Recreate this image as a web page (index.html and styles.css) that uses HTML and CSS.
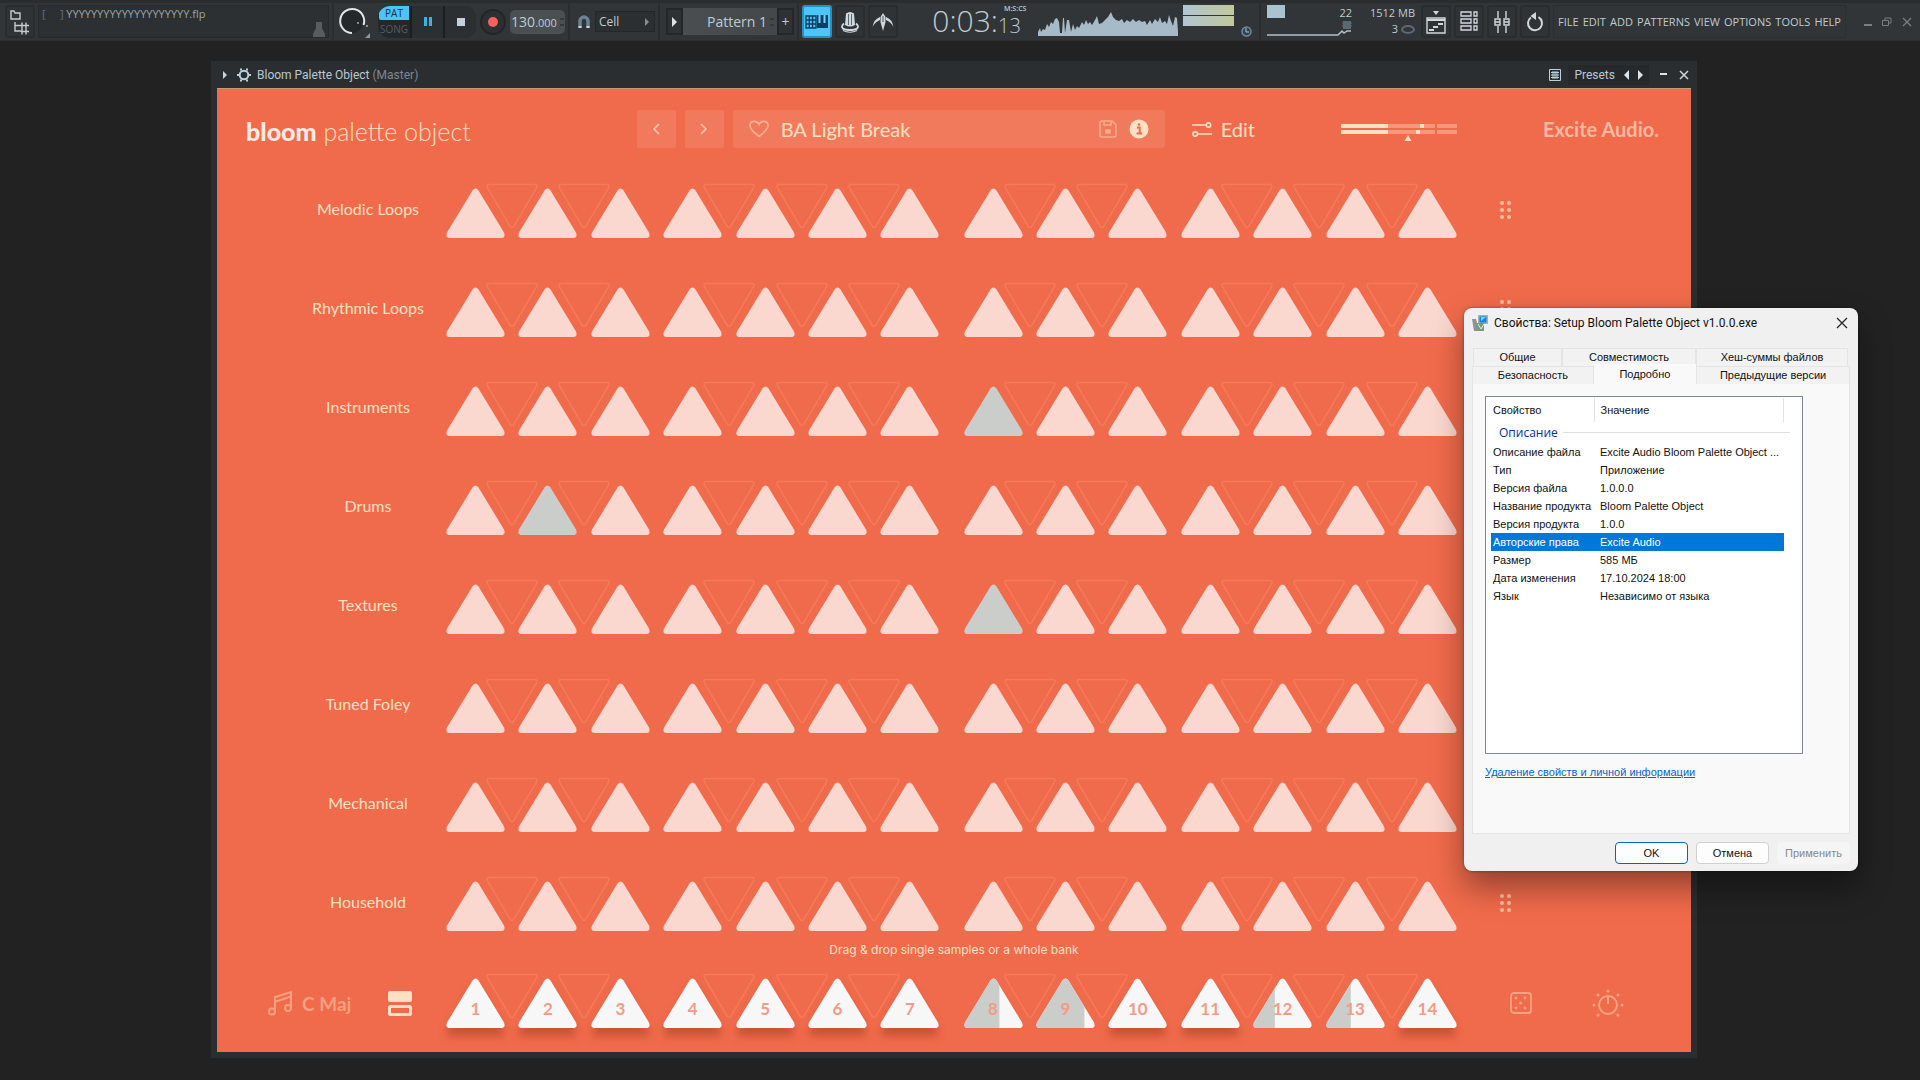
FILE: index.html
```html
<!DOCTYPE html>
<html lang="en">
<head>
<meta charset="utf-8">
<meta name="viewport" content="width=device-width, initial-scale=1">
<title>Bloom Palette Object</title>
<link rel="stylesheet" href="styles.css">
</head>
<body>
<header class="toolbar">
  <button class="tool tool-browser" aria-label="Browser">
    <svg width="22" height="26" viewBox="0 0 22 26" fill="none" stroke="#c3ccd2" stroke-width="1.4"><path d="M2 2h3l1 2h5v6H2zM6 13v9h6M6 16.500h6M13 13.500v6M17 13.500v6M13 19.500v6M17 19.500v6M12 16.500h8M12 22.500h8"/></svg>
  </button>
  <div class="hint-panel">
    <span class="file-name"><span class="brackets">[ &nbsp; &nbsp; ]</span> YYYYYYYYYYYYYYYYYYYY.flp</span>
    <svg class="hint-icon" width="12" height="16" viewBox="0 0 12 16"><path d="M3 1h6v6l3 6v3H0v-3l3-6z" fill="#565c60"/></svg>
  </div>
  <div class="rule"></div>
  <svg class="knob" width="40" height="33" viewBox="0 0 40 33"><circle cx="15" cy="16" r="12" fill="#25282a"/><path d="M15 28A12 12 0 1 1 26.500 20" fill="none" stroke="#dfe5e8" stroke-width="2"/><circle cx="21" cy="18" r="1" fill="#aaa"/><circle cx="30" cy="21" r="1" fill="#aaa"/><path d="M33 28v5h-5z" fill="#8c98a0"/></svg>
  <div class="transport">
    <div class="mode"><button class="pat">PAT</button><button class="song">SONG</button></div>
    <button class="play" aria-label="Pause"><svg width="8" height="9"><path d="M0 0h3v9H0zM5 0h3v9H5z" fill="#35b4e8"/></svg></button>
    <button class="stop" aria-label="Stop"><svg width="8" height="8"><path d="M0 0h8v8H0z" fill="#c5d0d8"/></svg></button>
  </div>
  <button class="record" aria-label="Record"><svg width="10" height="10"><circle cx="5" cy="5" r="5" fill="#f9605c"/></svg></button>
  <div class="tempo"><span>130</span><span class="tempo-small">.000</span><span class="spin"><i></i><i></i></span></div>
  <div class="rule"></div>
  <svg class="magnet" width="14" height="16" viewBox="0 0 14 16"><path d="M3 14V7a4 4 0 0 1 8 0v7" fill="none" stroke="#6b8194" stroke-width="3.500"/><path d="M1.500 13h3M9.500 13h3" stroke="#c6d4de" stroke-width="2"/></svg>
  <button class="snap">Cell<svg width="5" height="8"><path d="M0 0l4 4-4 4z" fill="#848c92"/></svg></button>
  <div class="rule"></div>
  <div class="pattern">
    <button class="pat-btn" aria-label="Pattern menu"><svg width="5" height="10"><path d="M0 0l5 5-5 5z" fill="#dbe4ea"/></svg></button>
    <span class="pat-name">Pattern 1<span class="spin"><i></i><i></i></span></span>
    <button class="pat-btn">+</button>
  </div>
  <div class="rule"></div>
  <button class="tool tool-on" aria-label="Typing keyboard"><svg width="24" height="14" viewBox="0 0 24 14"><path d="M1 1h10v12H1zM1 5h10M1 9h10M4.300 1v12M7.600 1v12" fill="none" stroke="#0b3f63" stroke-width="1.400"/><path d="M12 0h11v13H12z" fill="#0b3f63"/><path d="M14.500 0v8M19.500 0v8" stroke="#6fd5ff" stroke-width="2"/></svg></button>
  <button class="tool" aria-label="Metronome"><svg width="20" height="22" viewBox="0 0 20 22"><path d="M6 2.500q4-3 8 0l1 11.500q-5 3-10 0z" fill="#cfd8de"/><path d="M8.500 3v11M11.500 3v11" stroke="#5b656c"/><path d="M4 12.500C-1 17 4 19 10 19s11-2 6-6.500" fill="none" stroke="#cfd8de" stroke-width="1.800"/><path d="M3 19.500q7 3.500 14 0" fill="none" stroke="#cfd8de" stroke-width="1.200"/></svg></button>
  <button class="tool" aria-label="Wait for input"><svg width="22" height="20" viewBox="0 0 22 20"><path d="M11 1l2.500 4v5L11 19l-2.500-9V5z" fill="#cfd8de"/><path d="M11 4v6" stroke="#45545e"/><path d="M8 5Q2 7 .5 15 3 10 8 8zM14 5q6 2 7.500 10Q19 10 14 8z" fill="#cfd8de"/></svg></button>
  <div class="time"><span>0:03:</span><span class="time-side"><small>M:S:CS</small><span>13</span></span></div>
  <div class="scope">
    <svg width="140" height="24" viewBox="0 0 140 24"><path fill="#a6bac7" d="M0 24V20L2 16 3 20 5 17 7 18 9 12 11 15 13 10 15 12 17 7 19 6 21 10 22 21 24 21 25 6 26 6 27 21 29 8 31 8 33 20 35 12 37 18 39 14 41 16 44 10 46 13 48 8 50 12 52 10 54 13 57 8 59 4 61 12 64 11 67 8 70 5 73 0 75 5 78 8 81 9 84 7 86 11 89 8 92 10 95 7 98 10 101 8 104 10 107 9 109 13 112 8 114 12 117 7 120 10 122 5 124 11 127 9 129 12 131 3 133 9 135 14 137 5 139 6 140 20V24z"/></svg>
  </div>
  <div class="peaks"><div class="peak-bars"><i></i><i></i></div><svg class="peak-icon" width="11" height="11"><circle cx="5.500" cy="5.500" r="4.500" fill="#31434f" stroke="#6e899b" stroke-width="1.500"/><path d="M5 2v4h3" stroke="#a8c3d6" fill="none"/></svg></div>
  <div class="rule"></div>
  <div class="stats">
    <svg width="84" height="32" viewBox="0 0 84 32"><path d="M0 0h18v13H0z" fill="#a9c3d0"/><path d="M0 30h71l4-4 2 2 3-2h4" fill="none" stroke="#b4bfc6" stroke-width="1.500"/></svg>
    <div class="stat-col"><span>22</span><svg width="10" height="8"><path d="M1 0h8v8H1z" fill="#5b6972"/><path d="M0 2h10M0 5h10" stroke="#5b6972"/></svg></div>
    <div class="stat-col stat-mem"><span>1512 MB</span><span>3 <svg width="14" height="9"><ellipse cx="7" cy="4.500" rx="6" ry="3.500" fill="none" stroke="#5b6972" stroke-width="2"/></svg></span></div>
  </div>
  <div class="views">
    <button class="tool" aria-label="Playlist"><svg width="20" height="24" viewBox="0 0 20 24"><path d="M7 1h6l-3 4z" fill="#cfd8de"/><path d="M1 8h18v15H1z" fill="none" stroke="#cfd8de" stroke-width="1.400"/><path d="M1 10h18M3 20h5M7 17h5M12 14h5" stroke="#cfd8de" stroke-width="2"/></svg></button>
    <button class="tool" aria-label="Channel rack"><svg width="18" height="21" viewBox="0 0 18 21" fill="none" stroke="#cfd8de" stroke-width="1.300"><path d="M1 1h10v4H1zM1 8h10v4H1zM1 15h10v4H1zM14 1h3v4h-3zM14 8h3v4h-3zM14 15h3v4h-3z"/></svg></button>
    <button class="tool" aria-label="Mixer"><svg width="16" height="24" viewBox="0 0 16 24" fill="none" stroke="#cfd8de" stroke-width="1.400"><path d="M4 1v7M4 16v7M12 1v7M12 16v7M1 9h5v6H1zM10 9h5v6h-5zM1 12h5M10 12h5"/></svg></button>
    <button class="tool" aria-label="Undo"><svg width="18" height="20" viewBox="0 0 18 20"><path d="M12.500 5.200A7 7 0 1 1 5 5.500" fill="none" stroke="#cfd8de" stroke-width="2"/><path d="M10 0v8L4.500 4z" fill="#cfd8de"/></svg></button>
  </div>
  <nav class="menu">
    <a href="#">FILE</a><a href="#">EDIT</a><a href="#">ADD</a><a href="#">PATTERNS</a><a href="#">VIEW</a><a href="#">OPTIONS</a><a href="#">TOOLS</a><a href="#">HELP</a>
  </nav>
  <div class="app-controls">
    <button aria-label="Minimize"><svg width="8" height="8"><path d="M0 7h8" stroke="#777f85" stroke-width="2"/></svg></button>
    <button aria-label="Restore"><svg width="10" height="10" fill="none" stroke="#777f85"><path d="M.5 3.500h6v5h-6zM3 3V1h6v5H7"/></svg></button>
    <button aria-label="Close"><svg width="10" height="10"><path d="M1 1l8 8M9 1l-8 8" stroke="#777f85" stroke-width="1.300"/></svg></button>
  </div>
</header>

<main class="desktop">
  <section class="plugin">
    <div class="plugin-bar">
      <svg width="5" height="8"><path d="M0 0l4 4-4 4z" fill="#c5d4de"/></svg>
      <svg class="gear" width="14" height="14" viewBox="0 0 14 14"><circle cx="7" cy="7" r="4.300" fill="none" stroke="#bcd0dc" stroke-width="2"/><path d="M4 .5v2M10 .5v2M4 11.500v2M10 11.500v2M0 7h2M12 7h2" stroke="#bcd0dc" stroke-width="2"/></svg>
      <h1 class="plugin-title">Bloom Palette Object <span>(Master)</span></h1>
      <svg class="grid-icon" width="12" height="12" viewBox="0 0 12 12" fill="none" stroke="#bcd0dc"><path d="M.5.5h11v11H.5zM2 3.500h8M2 6h8M2 8.500h8M4 2v8M6 2v8M8 2v8"/></svg>
      <div class="presets"><span>Presets</span>
        <button aria-label="Previous preset"><svg width="5" height="10"><path d="M5 0v10L0 5z" fill="#dbe4ea"/></svg></button>
        <button aria-label="Next preset"><svg width="5" height="10"><path d="M0 0v10l5-5z" fill="#dbe4ea"/></svg></button>
      </div>
      <button class="bar-btn" aria-label="Minimize"><svg width="8" height="10"><path d="M0 4h7" stroke="#dbe4ea" stroke-width="2"/></svg></button>
      <button class="bar-btn" aria-label="Close"><svg width="10" height="10"><path d="M1 1l8 8M9 1l-8 8" stroke="#cfd8de" stroke-width="1.500"/></svg></button>
    </div>
    <div class="bloom">
      <div class="bloom-head">
        <div class="brand"><b>bloom</b> palette object</div>
        <button class="step" aria-label="Previous"><svg width="8" height="12"><path d="M7 1L2 6l5 5" fill="none" stroke="#fdc9a6" stroke-width="1.600"/></svg></button>
        <button class="step" aria-label="Next"><svg width="8" height="12"><path d="M1 1l5 5-5 5" fill="none" stroke="#fdc9a6" stroke-width="1.600"/></svg></button>
        <div class="preset">
          <svg width="20" height="18" viewBox="0 0 20 18"><path d="M10 16.500C4 12 1 9 1 5.600 1 1 7.500-.6 10 4.500 12.500-.6 19 1 19 5.600 19 9 16 12 10 16.500z" fill="none" stroke="#f9b294" stroke-width="1.600"/></svg>
          <span class="preset-name">BA Light Break</span>
          <svg width="18" height="18" viewBox="0 0 18 18" fill="none" stroke="#f9ab8b" stroke-width="1.600"><path d="M1 3q0-2 2-2h10l4 4v10q0 2-2 2H3q-2 0-2-2zM5 1v4h7V1"/><path d="M7 10h4v3H7z" fill="#f9ab8b"/></svg>
          <svg width="20" height="20" viewBox="0 0 20 20"><circle cx="10" cy="10" r="9.500" fill="#ffe0c2"/><path d="M8 8.500h2.700V14M7.500 14.500h5.500" fill="none" stroke="#ec6c4c" stroke-width="2"/><circle cx="10" cy="5.500" r="1.300" fill="#ec6c4c"/></svg>
        </div>
        <button class="edit"><svg width="20" height="15" viewBox="0 0 20 15" fill="none" stroke="#ffe0c2" stroke-width="1.700"><path d="M0 3h14M6 12h14"/><circle cx="16.500" cy="3" r="2.200"/><circle cx="3.200" cy="12" r="2.200"/></svg>Edit</button>
        <svg class="meter" width="116" height="20" viewBox="0 0 116 20"><path d="M0 1h94v4H0zM0 7h94v4H0zM96 1h20v4H96zM96 7h20v4H96z" fill="#f8977a"/><path d="M0 1h47v4H0zM0 7h47v4H0zM79 1h4v4h-4zM75 7h4v4h-4zM67 12l3.500 6h-7z" fill="#ffe0c2"/></svg>
        <div class="maker">Excite Audio.</div>
      </div>
      <div class="bank-list" id="banks"></div>
      <p class="drag-hint">Drag &amp; drop single samples or a whole bank</p>
      <div class="bank bank-play">
        <div class="scale-cell">
          <button class="scale"><svg width="26" height="26" viewBox="0 0 26 26" fill="none" stroke="#f8a080" stroke-width="2"><circle cx="4" cy="21.500" r="3"/><circle cx="20" cy="18" r="3"/><path d="M7 21V7l16-5v16M8 11.500l15-5"/></svg>C Maj</button>
          <button class="split" aria-label="Layout"><svg width="24" height="25" viewBox="0 0 24 25"><rect width="24" height="11" rx="2" fill="#ffe0c2"/><rect x="1.500" y="15.500" width="21" height="8" rx="1" fill="none" stroke="#ffe0c2" stroke-width="3"/></svg></button>
        </div>
        <div class="pads" id="play-left"></div>
        <div class="pads" id="play-right"></div>
        <div class="extra-cell">
          <button aria-label="Randomize"><svg width="22" height="22" viewBox="0 0 22 22"><rect x="1" y="1" width="20" height="20" rx="3" fill="none" stroke="#f9a382" stroke-width="1.800"/><g fill="#f9a382"><circle cx="6" cy="6" r="1.400"/><circle cx="15" cy="6" r="1.400"/><circle cx="10.500" cy="11" r="1.600"/><circle cx="6" cy="16" r="1.400"/><circle cx="15" cy="16" r="1.400"/></g></svg></button>
          <button aria-label="Macro"><svg width="32" height="28" viewBox="0 0 32 28"><circle cx="16" cy="16" r="9" fill="none" stroke="#f9a382" stroke-width="2"/><path d="M16 8v7" stroke="#f9a382" stroke-width="2"/><g fill="#f9a382"><circle cx="16" cy="2" r="1.500"/><circle cx="6" cy="6" r="1.500"/><circle cx="26" cy="6" r="1.500"/><circle cx="2" cy="16" r="1.500"/><circle cx="30" cy="16" r="1.500"/><circle cx="6" cy="26" r="1.500"/><circle cx="26" cy="26" r="1.500"/></g></svg></button>
        </div>
      </div>
    </div>
  </section>

  <section class="dialog" role="dialog" aria-labelledby="dialog-title">
    <div class="dialog-head">
      <svg width="16" height="16" viewBox="0 0 16 16"><path d="M0 4h4l3 12H2z" fill="#8d9294"/><path d="M6 0h10v9H6z" fill="#9fb3bf"/><path d="M7.500 1.500h7v6h-7z" fill="#1685d8"/><path d="M9 2h5L9 6z" fill="#6fd0fa"/><path d="M4 8h8v8H5z" fill="#7d9681"/><path d="M6 9l3 5 3-5" fill="none" stroke="#e5eee5"/></svg>
      <h2 id="dialog-title">Свойства: Setup Bloom Palette Object v1.0.0.exe</h2>
      <button class="dialog-close" aria-label="Закрыть"><svg width="12" height="12"><path d="M1 1l10 10M11 1L1 11" stroke="#222" stroke-width="1.200"/></svg></button>
    </div>
    <div class="tabs tabs-back"><button>Общие</button><button>Совместимость</button><button>Хеш-суммы файлов</button></div>
    <div class="tabs tabs-front"><button>Безопасность</button><button class="active">Подробно</button><button>Предыдущие версии</button></div>
    <div class="sheet">
      <div class="list">
        <table>
          <thead><tr><th>Свойство</th><th>Значение</th></tr></thead>
          <tbody>
            <tr class="group"><td colspan="2"><span>Описание</span></td></tr>
            <tr><td>Описание файла</td><td>Excite Audio Bloom Palette Object ...</td></tr>
            <tr><td>Тип</td><td>Приложение</td></tr>
            <tr><td>Версия файла</td><td>1.0.0.0</td></tr>
            <tr><td>Название продукта</td><td>Bloom Palette Object</td></tr>
            <tr><td>Версия продукта</td><td>1.0.0</td></tr>
            <tr class="selected"><td>Авторские права</td><td>Excite Audio</td></tr>
            <tr><td>Размер</td><td>585 МБ</td></tr>
            <tr><td>Дата изменения</td><td>17.10.2024 18:00</td></tr>
            <tr><td>Язык</td><td>Независимо от языка</td></tr>
          </tbody>
        </table>
      </div>
      <a href="#">Удаление свойств и личной информации</a>
    </div>
    <div class="actions"><button class="ok">OK</button><button>Отмена</button><button disabled>Применить</button></div>
  </section>
</main>
<script src="pads.js"></script>
</body>
</html>
```
FILE: pads.js
```js
// Rounded triangle of a pad, and the outline of the "black key" between two pads.
const PAD = 'M26.500 2.500Q29.500-1.500 32.500 2.500L58 44.500Q60 50 55 50H4Q-1 50 1 44.500Z';
const KEY = 'M43-3.500H89Q92-3.500 90.500 0L68 38Q66 41 64 38L41.500 0Q40-3.500 43-3.500Z';
const KEY_AFTER = [1, 2, 4, 5, 6, 8, 9, 11, 12, 13];

const banks = [
  { name: 'Melodic Loops' },
  { name: 'Rhythmic Loops' },
  { name: 'Instruments', active: 8 },
  { name: 'Drums', active: 2 },
  { name: 'Textures', active: 8 },
  { name: 'Tuned Foley' },
  { name: 'Mechanical' },
  { name: 'Household' }
];
const progress = { 8: 60, 9: 82, 12: 37, 13: 42 };

function key(n) {
  return KEY_AFTER.includes(n) ? `<path class="key" d="${KEY}"/>` : '';
}

function samplePad(n, bank) {
  const on = bank.active === n ? ' on' : '';
  return `<button class="pad${on}" aria-label="${bank.name} ${n}"><svg viewBox="0 0 59 50">${key(n)}<path class="face" d="${PAD}"/></svg></button>`;
}

function playPad(n) {
  const p = progress[n];
  const played = p
    ? `<clipPath id="clip${n}"><rect width="${p}%" height="50"/></clipPath><path class="played" clip-path="url(#clip${n})" d="${PAD}"/>`
    : '';
  return `<button class="pad play-pad${p ? ' playing' : ''}"><svg viewBox="0 0 59 50">${key(n)}<path class="face" d="${PAD}"/>${played}</svg><span>${n}</span></button>`;
}

const left = [1, 2, 3, 4, 5, 6, 7];
const right = [8, 9, 10, 11, 12, 13, 14];

document.getElementById('banks').innerHTML = banks.map(b => `
  <div class="bank">
    <div class="bank-name">${b.name}</div>
    <div class="pads">${left.map(n => samplePad(n, b)).join('')}</div>
    <div class="pads">${right.map(n => samplePad(n, b)).join('')}</div>
    <div class="grip"><i></i><i></i><i></i><i></i><i></i><i></i></div>
  </div>`).join('');
document.getElementById('play-left').innerHTML = left.map(playPad).join('');
document.getElementById('play-right').innerHTML = right.map(playPad).join('');
```
FILE: styles.css
```css
* { box-sizing: border-box; }
body {
  margin: 0;
  min-height: 100vh;
  display: flex;
  flex-direction: column;
  background: #222;
  overflow: hidden;
  font-family: "Open Sans", "Noto Sans", sans-serif;
}
button {
  margin: 0;
  padding: 0;
  border: 0;
  background: none;
  color: inherit;
  font: inherit;
}
svg { display: block; flex: none; }
h1, h2, p { margin: 0; font-weight: 400; }

/* Top toolbar */
.toolbar {
  display: flex;
  align-items: center;
  height: 41px;
  padding-left: 5px;
  background: #323537;
  border-top: 3px solid #2a2c2e;
  border-bottom: 1px solid #2a2c2e;
  color: #bfcbd3;
  font-family: "Open Sans", "Noto Sans", sans-serif;
  white-space: nowrap;
}
.toolbar > * { flex: none; }
.tool {
  display: flex;
  align-items: center;
  justify-content: center;
  width: 30px;
  height: 33px;
  margin-right: 3px;
  border: 2px solid #2a2d2f;
  border-radius: 3px;
  background: #303335;
}
.tool-on {
  border-color: #1e93c8;
  background: #4cc6f6;
}
.hint-panel {
  display: flex;
  justify-content: space-between;
  width: 291px;
  height: 33px;
  padding: 0 3px;
  background: #2d3032;
  border: 1px solid #272a2c;
}
.file-name { font-size: 11px; line-height: 16px; color: #9ba4aa; }
.brackets { color: #687076; }
.hint-icon { align-self: flex-end; }
.rule {
  width: 2px;
  height: 37px;
  margin: 0 3px;
  background: #2a2d2f;
}
.knob { margin-right: 1px; }
.transport {
  display: flex;
  width: 98px;
  height: 32px;
  border-radius: 12px;
  background: #25282a;
  overflow: hidden;
}
.transport > button {
  display: grid;
  place-items: center;
  flex: 1;
  border-left: 2px solid #1b1d1f;
  background: #2c2f31;
}
.mode { display: grid; grid-template-rows: 14px 1fr; width: 32px; padding: 0 1px; }
.pat { border-radius: 6px 0 0 2px; background: #4cc4f4; color: #0d3550; font-size: 10px; line-height: 14px; }
.song { color: #565c60; font-size: 10px; line-height: 14px; }
.record {
  display: grid;
  place-items: center;
  width: 26px;
  height: 26px;
  margin: 0 4px;
  border: 2px solid #232628;
  border-radius: 50%;
  background: #2d3032;
}
.tempo {
  display: flex;
  align-items: baseline;
  justify-content: center;
  width: 55px;
  height: 24px;
  border-radius: 5px;
  background: #4a4f52;
  font-size: 14px;
  line-height: 24px;
}
.tempo-small { font-size: 11px; }
.spin { display: inline-grid; gap: 4px; margin-left: 3px; align-self: center; }
.spin i { width: 4px; height: 2px; background: #33383b; }
.magnet { margin: 0 4px; }
.snap {
  display: flex;
  align-items: center;
  justify-content: space-between;
  width: 60px;
  height: 21px;
  padding: 0 4px 0 3px;
  border: 1px solid #24272a;
  background: #2c2f31;
  font-size: 12px;
}
.pattern { display: flex; margin-left: 3px; }
.pat-btn {
  display: grid;
  place-items: center;
  width: 17px;
  height: 27px;
  border: 2px solid #24272a;
  background: #2f3234;
  font-size: 14px;
  line-height: 16px;
}
.pat-name {
  display: flex;
  align-items: center;
  justify-content: flex-end;
  width: 94px;
  padding-right: 3px;
  background: linear-gradient(90deg, #4a4e50, #434749);
  font-size: 14px;
}
.time {
  display: flex;
  justify-content: flex-end;
  width: 132px;
  height: 35px;
  padding-right: 3px;
  font-size: 30px;
  font-weight: 300;
  line-height: 34px;
}
.time-side { display: flex; flex-direction: column; width: 32px; font-size: 20px; line-height: 23px; }
.time-side small { padding-left: 6px; font-size: 7px; font-weight: 600; line-height: 10px; }
.scope { margin-left: 5px; padding-top: 5px; }
.peaks { display: flex; flex-direction: column; width: 78px; height: 35px; padding: 1px 4px 0 5px; }
.peak-bars { display: grid; gap: 1px; width: 51px; }
.peak-bars i { height: 10px; background: linear-gradient(90deg, #b0c6d2, #c3c79b); }
.peak-icon { align-self: flex-end; }
.stats { display: flex; height: 33px; padding-left: 3px; font-size: 11px; line-height: 16px; }
.stat-col { display: flex; flex-direction: column; align-items: flex-end; width: 1px; }
.stat-mem { width: 63px; }
.stat-mem span { display: flex; align-items: center; gap: 3px; }
.views { display: flex; margin-left: 6px; }
.toolbar .menu {
  display: flex;
  flex: 1;
  align-items: center;
  justify-content: space-between;
  height: 33px;
  padding: 0 4px;
  border: 1px solid #2c2f31;
  font-size: 11px;
}
.menu a { color: inherit; text-decoration: none; }
.app-controls { display: flex; align-items: center; gap: 10px; margin-left: 18px; padding-right: 8px; }

/* Plugin window */
.desktop { position: relative; flex: 1; }
.plugin {
  position: absolute;
  top: 20px;
  left: 211px;
  right: 223px;
  padding: 0 6px 6px;
  background: #2b2e30;
}
.plugin-bar {
  display: flex;
  align-items: center;
  height: 28px;
  padding: 0 2px 0 6px;
  border-bottom: 1px solid #c4987c;
  color: #b9c9d3;
  font: 12px/18px Roboto, "Open Sans", sans-serif;
}
.gear { margin: 0 6px 0 9px; }
.plugin-title { flex: 1; font-size: 12px; }
.plugin-title span { color: #7c8790; }
.presets { display: flex; align-items: center; gap: 9px; height: 20px; margin-left: 7px; padding: 0 6px; background: #26292b; }
.bar-btn { margin-left: 11px; }
.bloom {
  background: #f06b4b;
  color: #ffe0c2;
  font-family: Lato, "Open Sans", sans-serif;
  padding: 21px 0 24px;
}
.bloom-head { display: flex; align-items: center; height: 38px; margin-bottom: 40px; padding: 0 32px 0 29px; }
.brand { flex: 1; font-size: 25px; font-weight: 300; line-height: 28px; padding-top: 4px; }
.brand b { color: #ffe9e2; font-weight: 900; }
.step {
  display: grid;
  place-items: center;
  width: 39px;
  height: 38px;
  margin-right: 9px;
  border-radius: 2px;
  background: #f27a5c;
}
.preset {
  display: flex;
  align-items: center;
  gap: 12px;
  width: 432px;
  height: 38px;
  padding: 0 16px;
  border-radius: 3px;
  background: #f27a5c;
}
.preset-name { flex: 1; font-size: 20px; line-height: 24px; }
.edit { display: flex; align-items: center; gap: 9px; margin-left: 27px; font-size: 20px; line-height: 24px; }
.meter { margin: 8px 86px 0; }
.maker { color: #fbb8a0; font-size: 20px; font-weight: 700; }

.bank-list { display: grid; gap: 49px; }
.bank { display: grid; grid-template-columns: 229px 1fr 1fr 234px; align-items: center; }
.pads { display: flex; justify-content: space-between; height: 50px; }
.pads + .pads { margin-left: 12px; }
.pads:has(+ .pads) { margin-right: 12px; }
.bank-name { padding: 0 0 8px 73px; text-align: center; font-size: 16px; line-height: 20px; }
.pad { position: relative; width: 59px; height: 50px; }
.pad svg { width: 59px; height: 50px; overflow: visible; pointer-events: none; }
.face { fill: #fad8cf; }
.on .face { fill: #cbcdca; }
.key { fill: none; stroke: #f57a58; stroke-width: 1.500; }
.play-pad .face { fill: #f7f7f7; filter: drop-shadow(0 8px 4px rgba(150, 50, 25, .45)); }
.playing .face { filter: none; }
.played { fill: #cbcdca; }
.play-pad span { position: absolute; left: 0; right: 0; top: 20px; color: #f29c88; font-size: 17px; font-weight: 700; line-height: 22px; }
.grip { display: grid; grid-template-columns: 4px 4px; gap: 3px; justify-content: start; padding: 0 0 6px 43px; }
.grip i { width: 4px; height: 4px; border-radius: 50%; background: #fcc0a0; }
.drag-hint { padding: 10px 0 19px; text-align: center; font: 12px/18px Inter, sans-serif; }
.scale-cell { display: flex; justify-content: space-between; align-items: center; padding-right: 34px; padding-left: 51px; }
.scale { display: flex; align-items: center; gap: 8px; color: #f8a080; font-size: 19px; font-weight: 700; }
.extra-cell { display: flex; align-items: center; gap: 60px; padding-left: 53px; }

/* File properties dialog */
.dialog {
  position: absolute;
  top: 267px;
  right: 62px;
  width: 394px;
  padding: 0 8px 7px;
  border-radius: 8px;
  background: #f0f0f0;
  box-shadow: 0 16px 32px rgba(0, 0, 0, .4), 0 0 3px rgba(0, 0, 0, .4);
  color: #111;
  font: 11px/18px "Liberation Sans", Arial, sans-serif;
}
.dialog-head { display: flex; align-items: center; gap: 6px; height: 30px; }
.dialog h2 { flex: 1; font: 12px/18px Roboto, "Noto Sans", sans-serif; }
.dialog-close { padding-right: 2px; }
.tabs { display: grid; height: 18px; }
.tabs button { border: 1px solid #e4e4e4; border-bottom: 0; background: #f2f2f2; line-height: 17px; }
.tabs-back { grid-template-columns: 89fr 134fr 152fr; margin-top: 10px; padding: 0 2px 0 1px; }
.tabs-front { grid-template-columns: 121fr 102fr 153fr; }
.tabs .active { margin-top: -2px; background: #f9f9f9; border-color: #f9f9f9; }
.sheet { padding: 12px 12px 52px; border: 1px solid #e4e4e4; border-top: 0; background: #f9f9f9; }
.list { width: 318px; height: 358px; margin-bottom: 9px; padding: 1px 5px; border: 1px solid #828790; background: #fff; }
.list table { width: 293px; border-collapse: collapse; table-layout: fixed; white-space: nowrap; }
.list th { height: 24px; padding: 0 0 0 6px; border-right: 1px solid #e2e2e2; text-align: left; font-weight: 400; }
.list th:first-child { width: 103px; padding-left: 2px; }
.list td { height: 18px; padding: 0 0 0 6px; line-height: 18px; }
.list td:first-child { padding-left: 2px; }
.list .group td { height: 21px; padding-left: 8px; }
.group span { display: flex; align-items: center; gap: 5px; margin-right: -6px; color: #003399; font: 12px/18px "Open Sans", sans-serif; }
.group span::after { content: ""; flex: 1; height: 1px; background: #dcdfe6; }
.selected { background: #0078d7; color: #fff; }
.sheet a { color: #0066cc; }
.actions { display: flex; justify-content: flex-end; gap: 8px; padding-top: 8px; }
.actions button { width: 73px; height: 22px; border: 1px solid #d0d0d0; border-radius: 4px; background: #fdfdfd; }
.actions .ok { border-color: #0067c0; }
.actions button:disabled { border-color: #f5f5f5; background: #f5f5f5; color: #888; }
```
